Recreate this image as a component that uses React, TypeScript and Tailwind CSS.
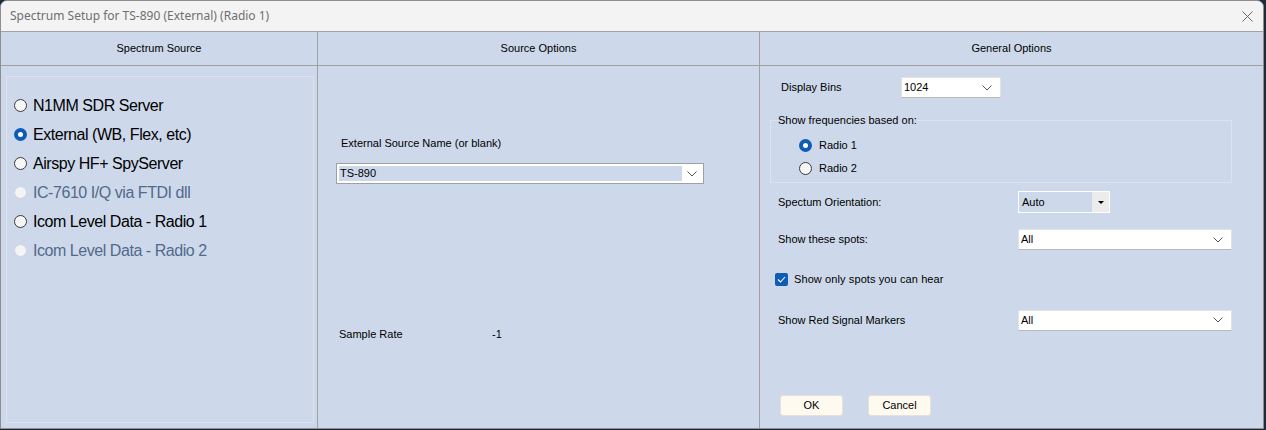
import React from "react";

const BG = "bg-[#cdd9ea]";

function Radio({ checked, disabled }: { checked?: boolean; disabled?: boolean }) {
  if (checked) {
    return (
      <span className="w-[13px] h-[13px] rounded-full bg-[#0f5cb5] flex items-center justify-center shrink-0">
        <span className="w-[5px] h-[5px] rounded-full bg-white" />
      </span>
    );
  }
  return (
    <span
      className={
        "w-[13px] h-[13px] rounded-full border shrink-0 " +
        (disabled ? "border-[#cfd3d8] bg-[#f3f4f6]" : "border-[#3a3a3a] bg-[#f6f6f6]")
      }
    />
  );
}

function Chevron() {
  return (
    <svg width="10" height="6" viewBox="0 0 10 6" className="shrink-0">
      <path d="M0.5 0.5 L5 5 L9.5 0.5" fill="none" stroke="#555" strokeWidth="1" />
    </svg>
  );
}

function Drop({ value, w }: { value: string; w: string }) {
  return (
    <div
      className={
        "h-[21px] bg-white border border-[#e2e2e2] border-b-[#b9b9b9] flex items-center justify-between pl-[2px] pr-[8px] text-[11px] text-black " +
        w
      }
    >
      <span>{value}</span>
      <Chevron />
    </div>
  );
}

export default function App() {
  const sans = { fontFamily: '"Liberation Sans", Arial, sans-serif' };
  return (
    <div className="w-[1266px] h-[430px] bg-[#1c2a3a] overflow-hidden" style={sans}>
      <div className={"w-[1264px] h-[429px] rounded-t-[7px] border border-[#8e8e8e] overflow-hidden flex flex-col " + BG}>
        {/* title bar */}
        <div className="h-[31px] bg-[#f3f3f3] border-b border-[#a3a3a3] flex items-center justify-between pl-[9px] pr-[10px] shrink-0">
          <span className="text-[12px] text-[#6f6f6f]" style={{ fontFamily: '"Noto Sans", "Open Sans", sans-serif' }}>
            Spectrum Setup for TS-890 (External) (Radio 1)
          </span>
          <svg width="11" height="11" viewBox="0 0 11 11">
            <path d="M0.5 0.5 L10.5 10.5 M10.5 0.5 L0.5 10.5" stroke="#6a6a6a" strokeWidth="1" />
          </svg>
        </div>
        {/* header row */}
        <div className="h-[34px] flex border-b border-[#a0a0a0] text-[11px] text-black shrink-0">
          <div className="w-[317px] border-r border-[#a0a0a0] flex items-center justify-center">Spectrum Source</div>
          <div className="w-[442px] border-r border-[#a0a0a0] flex items-center justify-center">Source Options</div>
          <div className="flex-1 flex items-center justify-center">General Options</div>
        </div>
        {/* body */}
        <div className="flex-1 flex">
          {/* left */}
          <div className="w-[317px] border-r border-[#a0a0a0] pl-[5px] pr-[3px] pt-[10px] pb-[5px]">
            <div className="h-full border border-[#dbe3ee] pl-[7px] pt-[14px] flex flex-col">
              {[
                { t: "N1MM SDR Server" },
                { t: "External (WB, Flex, etc)", c: true },
                { t: "Airspy HF+ SpyServer" },
                { t: "IC-7610 I/Q via FTDI dll", d: true },
                { t: "Icom Level Data - Radio 1" },
                { t: "Icom Level Data - Radio 2", d: true },
              ].map((r) => (
                <div key={r.t} className="h-[29px] flex items-center gap-[6px]">
                  <Radio checked={r.c} disabled={r.d} />
                  <span className={"text-[16px] tracking-[-0.45px] " + (r.d ? "text-[#52698b]" : "text-black")}>{r.t}</span>
                </div>
              ))}
            </div>
          </div>
          {/* middle */}
          <div className="w-[442px] border-r border-[#a0a0a0] pl-[18px] pt-[71px] flex flex-col text-[11px] text-black">
            <div className="pl-[5px] h-[13px] leading-[13px]">External Source Name (or blank)</div>
            <div className="mt-[13px] w-[368px] h-[21px] border border-[#a0a0a0] bg-white flex items-center p-[2px]">
              <div className={"flex-1 h-full flex items-center pl-[1px] " + BG}>TS-890</div>
              <div className="w-[19px] flex items-center justify-center">
                <Chevron />
              </div>
            </div>
            <div className="mt-[142px] pl-[3px] flex">
              <span className="w-[153px]">Sample Rate</span>
              <span>-1</span>
            </div>
          </div>
          {/* right */}
          <div className="flex-1 flex flex-col text-[11px] text-black pl-[10px]">
            <div className="mt-[11px] flex items-center pl-[11px]">
              <span className="w-[120px]">Display Bins</span>
              <Drop value="1024" w="w-[100px]" />
            </div>
            <div className="mt-[22px] w-[462px] h-[63px] border border-[#dbe3ee] relative">
              <span className={"absolute -top-[7px] left-[7px] leading-[13px] pr-[1px] " + BG}>Show frequencies based on:</span>
              <div className="pt-[13px] pl-[28px] flex flex-col">
                <div className="h-[23px] flex items-center gap-[7px]">
                  <Radio checked />
                  <span>Radio 1</span>
                </div>
                <div className="h-[23px] flex items-center gap-[7px]">
                  <Radio />
                  <span>Radio 2</span>
                </div>
              </div>
            </div>
            <div className="mt-[8px] flex items-center pl-[8px]">
              <span className="w-[240px]">Spectum Orientation:</span>
              <div className="w-[92px] h-[22px] border border-white flex">
                <div className={"flex-1 flex items-center pl-[3px] " + BG}>Auto</div>
                <div className="w-[17px] bg-[#ececec] flex items-center justify-center">
                  <svg width="6" height="3" viewBox="0 0 6 3">
                    <path d="M0 0 L6 0 L3 3 Z" fill="#000" />
                  </svg>
                </div>
              </div>
            </div>
            <div className="mt-[16px] flex items-center pl-[8px]">
              <span className="w-[240px]">Show these spots:</span>
              <Drop value="All" w="w-[214px]" />
            </div>
            <div className="mt-[21px] flex items-center pl-[5px] gap-[6px]">
              <span className="w-[13px] h-[13px] rounded-[2px] bg-[#0f5cb5] flex items-center justify-center">
                <svg width="9" height="7" viewBox="0 0 9 7">
                  <path d="M1 3.5 L3.5 6 L8 1" fill="none" stroke="#fff" strokeWidth="1.1" />
                </svg>
              </span>
              <span className="tracking-[0.1px]">Show only spots you can hear</span>
            </div>
            <div className="mt-[22px] flex items-center pl-[8px]">
              <span className="w-[240px]">Show Red Signal Markers</span>
              <Drop value="All" w="w-[214px]" />
            </div>
            <div className="mt-[64px] flex pl-[10px] gap-[25px]">
              <button className="w-[63px] h-[21px] rounded-[3px] bg-[#fffaf0] border border-[#e6e2da] text-[11px]">OK</button>
              <button className="w-[63px] h-[21px] rounded-[3px] bg-[#fffaf0] border border-[#e6e2da] text-[11px]">Cancel</button>
            </div>
          </div>
        </div>
      </div>
    </div>
  );
}
